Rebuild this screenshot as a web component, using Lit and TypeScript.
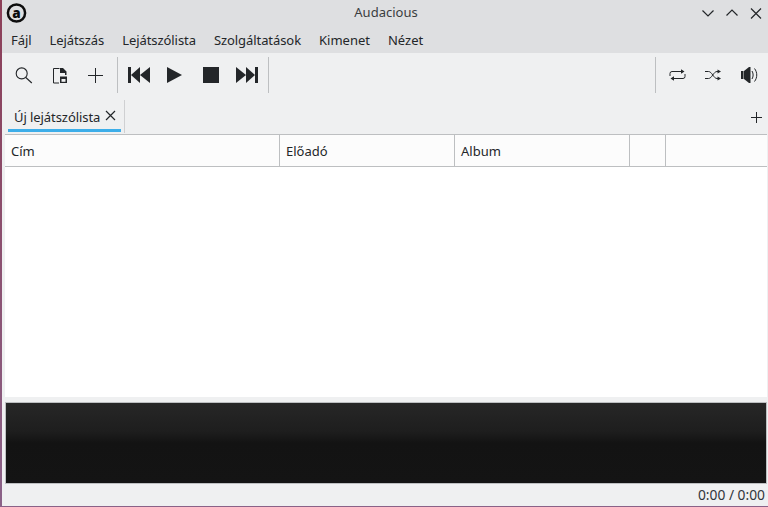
import { LitElement, html, css, svg } from "lit";
import { customElement } from "lit/decorators.js";

const ic = (w: number, h: number, body: unknown) =>
  html`<svg width=${w} height=${h} viewBox="0 0 ${w} ${h}">${body}</svg>`;

@customElement("app-root")
export class AppRoot extends LitElement {
  static styles = css`
    :host {
      display: block;
      width: 768px;
      height: 507px;
      overflow: hidden;
      font-family: "Noto Sans", sans-serif;
      font-size: 13px;
      color: #232629;
      background: #eff0f1;
    }
    .win {
      box-sizing: border-box;
      height: 507px;
      display: flex;
      flex-direction: column;
      padding-right: 1px;
      border-left: 2px solid;
      border-image: linear-gradient(#8c3f58, #8a6288) 1;
      border-bottom: 1px solid #bdbfc1;
      border-image-slice: 1;
      border-top: 0;
      border-right: 0;
    }
    .chrome { background: #dedfe1; height: 53px; margin-right: -1px; display: flex; flex-direction: column; flex: none; }
    .title { height: 26px; display: flex; align-items: center; position: relative; }
    .logo { margin-left: 4px; display: flex; }
    .title-text { position: absolute; left: 0; right: 0; text-align: center; top: 3px; color: #3a3d40; margin-left: 2px; font-size: 13px; line-height: 18px; }
    .wbtns { margin-left: auto; display: flex; gap: 8px; margin-right: 4px; z-index: 1; }
    .menu { display: flex; gap: 18px; padding-left: 9px; height: 27px; align-items: center; line-height: 18px; letter-spacing: -0.07px; }
    .menu .wide { letter-spacing: 0; }
    .toolbar { height: 44px; display: flex; align-items: center; background: #eff0f1; flex: none; }
    .tb { display: flex; align-items: center; }
    .sep { width: 1px; height: 36px; background: #bdbfc1; flex: none; }
    .tabs { height: 37px; display: flex; position: relative; flex: none; }
    .tab { margin-left: 6px; width: 116px; height: 33px; margin-top: 3px; position: relative; line-height: 18px; border-right: 1px solid #cfd0d2; }
    .tab span { position: absolute; left: 6px; top: 8px; letter-spacing: -0.07px; white-space: nowrap; }
    .tab svg { position: absolute; left: 97px; top: 10px; }
    .tab::after { content: ""; position: absolute; left: 0; bottom: 1px; width: 113px; height: 3px; background: #3daee9; }
    .add { position: absolute; right: 4px; top: 15px; display: flex; }
    .list { margin-left: 3px; height: 263px; background: #fff; border-top: 1px solid #bdbfc1; display: flex; flex-direction: column; box-sizing: border-box; flex: none; }
    .hdr { height: 32px; box-sizing: border-box; display: flex; background: #fcfcfc; border-bottom: 1px solid #bdbfc1; flex: none; }
    .hc { box-sizing: border-box; padding-left: 6px; border-right: 1px solid #bdbfc1; line-height: 32px; flex: none; height: 31px; }
    .hc.last { border-right: none; flex: 1; }
    .vis { margin: 5px 0 0 3px; height: 82px; box-sizing: border-box; border: 1px solid #bdbfc1; background: linear-gradient(#272727 0%, #1e1e1e 35%, #131313 50%, #141414 100%); flex: none; }
    .status { flex: 1; display: flex; justify-content: flex-end; align-items: center; padding-right: 2px; line-height: 18px; color: #31363b; font-size: 13.8px; }
    .logo text { font-family: "Noto Sans", sans-serif; font-weight: 900; font-size: 13.5px; }
  `;

  private logo() {
    return ic(21, 21, svg`
      <circle cx="10.500" cy="10" r="8.600" fill="none" stroke="#0d0d0d" stroke-width="2.500"/>
      <text x="10.500" y="14.500" text-anchor="middle" fill="#0d0d0d">a</text>`);
  }

  private btn(w: number, ml: number, body: unknown) {
    return html`<span class="tb" style="margin-left:${ml}px">${ic(w, 20, body)}</span>`;
  }

  render() {
    const s = "#232629";
    return html`<div class="win">
      <div class="chrome">
        <div class="title">
          <span class="logo">${this.logo()}</span>
          <div class="title-text">Audacious</div>
          <div class="wbtns">
            ${ic(16, 16, svg`<path d="M2.500 5.500L8 11l5.500-5.500" fill="none" stroke="${s}" stroke-width="1.200"/>`)}
            ${ic(16, 16, svg`<path d="M2.500 10.500L8 5l5.500 5.500" fill="none" stroke="${s}" stroke-width="1.200"/>`)}
            ${ic(16, 16, svg`<path d="M3 3.500l10 10M13 3.500l-10 10" fill="none" stroke="${s}" stroke-width="1.200"/>`)}
          </div>
        </div>
        <div class="menu">
          <span>Fájl</span><span>Lejátszás</span><span>Lejátszólista</span><span>Szolgáltatások</span><span class="wide">Kimenet</span><span class="wide">Nézet</span>
        </div>
      </div>
      <div class="toolbar">
        ${this.btn(18, 13, svg`<circle cx="6.700" cy="8.400" r="5.500" fill="none" stroke="${s}" stroke-width="1.100"/><path d="M10.800 12.500l6 5.500" stroke="${s}" stroke-width="1.100"/>`)}
        ${this.btn(16, 19, svg`<path d="M7.500 3.500H1.500v14.500h5.500" fill="none" stroke="${s}" stroke-width="1"/><path d="M8 3h3l3.500 3.500V10H13V8H8z" fill="${s}"/><path d="M8 11.500h7V18H8z" fill="${s}"/><rect x="9.500" y="14" width="4" height="2.800" fill="#eff0f1"/>`)}
        ${this.btn(16, 20, svg`<path d="M7.500 3v15M0 10.500h15" stroke="${s}" stroke-width="1"/>`)}
        <span class="sep" style="margin-left:13px"></span>
        ${this.btn(22, 10, svg`<rect x="0" y="2" width="3" height="16" fill="${s}"/><path d="M3 10l9-8v16zM12 10l10-8v16z" fill="${s}"/>`)}
        ${this.btn(15, 17, svg`<path d="M0 2v16l15-8z" fill="${s}"/>`)}
        ${this.btn(16, 21, svg`<rect y="2" width="16" height="16" fill="${s}"/>`)}
        ${this.btn(22, 17, svg`<rect x="19" y="2" width="3" height="16" fill="${s}"/><path d="M0 2l10 8-10 8zM10 2l9 8-9 8z" fill="${s}"/>`)}
        <span class="sep" style="margin-left:10px"></span>
        <span class="sep" style="margin-left:386px"></span>
        ${this.btn(17, 13, svg`<path d="M1 11V8.500a2 2 0 0 1 2-2h11.500" fill="none" stroke="${s}" stroke-width="1"/><path d="M16 9v2.500a2 2 0 0 1-2 2H2.500" fill="none" stroke="${s}" stroke-width="1"/><path d="M12 4.200l3.500 2.300L12 8.800zM5 11.200l-3.500 2.300L5 15.800z" fill="${s}"/>`)}
        ${this.btn(16, 19, svg`<path d="M0 6.500h3.500c3.500 0 5 7 8.500 7h2M0 13.500h3.500c3.500 0 5-7 8.500-7h2" fill="none" stroke="${s}" stroke-width="1"/><path d="M12.500 4.500l3.500 2-3.500 2zM12.500 11.500l3.500 2-3.500 2z" fill="${s}"/>`)}
        ${this.btn(17, 20, svg`<rect x="0" y="6" width="2.500" height="8" fill="${s}"/><path d="M3 6l5-4h1.500v16H8l-5-4z" fill="${s}"/><path d="M11 6c1.500 2.500 1.500 5.500 0 8M13.500 3.500c3 4 3 9 0 13" fill="none" stroke="${s}" stroke-width="1"/>`)}
      </div>
      <div class="tabs">
        <div class="tab">
          <span>Új lejátszólista</span>
          ${ic(12, 12, svg`<path d="M1 1l9 9M10 1l-9 9" stroke="${s}" stroke-width="1.200"/>`)}
        </div>
        <span class="add">${ic(12, 12, svg`<path d="M5.500 0v11M0 5.500h11" stroke="${s}" stroke-width="1"/>`)}</span>
      </div>
      <div class="list">
        <div class="hdr">
          <div class="hc" style="width:275px">Cím</div>
          <div class="hc" style="width:175px">Előadó</div>
          <div class="hc" style="width:175px">Album</div>
          <div class="hc" style="width:36px"></div>
          <div class="hc last"></div>
        </div>
      </div>
      <div class="vis"></div>
      <div class="status">0:00 / 0:00</div>
    </div>`;
  }
}
